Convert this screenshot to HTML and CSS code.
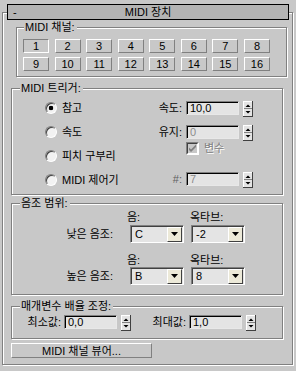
FILE: index.html
```html
<!DOCTYPE html>
<html>
  <head>
    <meta charset="utf-8">
    <link rel="stylesheet" href="styles.css">
  </head>
  <body>
    <svg class="sprites" xmlns="http://www.w3.org/2000/svg">
      <symbol id="spin" viewBox="0 0 10 16">
        <rect width="10" height="16" fill="#e4e4e4"/>
        <path d="M0 0.5H9.5M0.5 0V15.5" stroke="#fff"/>
        <path d="M0 15.5H10M9.5 0V16" stroke="#404040"/>
        <path d="M1 7.5H9" stroke="#808080"/>
        <path d="M2.5 6H7.5L5 3.5Z" fill="#000"/>
        <path d="M2.5 10H7.5L5 12.5Z" fill="#000"/>
      </symbol>
      <symbol id="drop" viewBox="0 0 7 4">
        <path d="M0 0H7L3.5 4Z" fill="#000"/>
      </symbol>
    </svg>

    <div class="rollout">
      <div class="rollout-title">
        <span class="collapse">-</span>
        <span>MIDI 장치</span>
      </div>

      <!-- channel buttons -->
      <div class="group channels">
        <div class="group-label">MIDI 채널:</div>
        <div class="channel-grid">
          <button class="btn pressed">1</button>
          <button class="btn">2</button>
          <button class="btn">3</button>
          <button class="btn">4</button>
          <button class="btn">5</button>
          <button class="btn">6</button>
          <button class="btn">7</button>
          <button class="btn">8</button>
          <button class="btn">9</button>
          <button class="btn">10</button>
          <button class="btn">11</button>
          <button class="btn">12</button>
          <button class="btn">13</button>
          <button class="btn">14</button>
          <button class="btn">15</button>
          <button class="btn">16</button>
        </div>
      </div>

      <!-- trigger -->
      <div class="group trigger">
        <div class="group-label">MIDI 트리거:</div>
        <div class="trigger-body">
          <div class="radio-list">
            <div class="radio-row"><span class="radio checked"></span>참고</div>
            <div class="radio-row"><span class="radio"></span>속도</div>
            <div class="radio-row"><span class="radio"></span>피치 구부리</div>
            <div class="radio-row"><span class="radio"></span>MIDI 제어기</div>
          </div>
          <div class="field-list">
            <div class="field-row">
              <span class="field-label">속도:</span>
              <span class="input">10,0</span>
              <svg class="spinner"><use href="#spin"/></svg>
            </div>
            <div class="field-row gap">
              <span class="field-label">유지:</span>
              <span class="input disabled">0</span>
              <svg class="spinner"><use href="#spin"/></svg>
            </div>
            <div class="check-row">
              <svg class="checkbox" viewBox="0 0 13 13">
                <rect width="13" height="13" fill="#fff"/>
                <path d="M0 0.5H12.5M0.5 0V12.5" stroke="#808080"/>
                <path d="M1 1.5H11.5M1.5 1V11.5" stroke="#404040"/>
                <rect x="2" y="2" width="9" height="9" fill="#c8c8c8"/>
                <path d="M3 5.5L5 7.5L10 2.5V5L5 10L3 8Z" fill="#808080"/>
              </svg>
              <span class="disabled-text">변수</span>
            </div>
            <div class="field-row far">
              <span class="field-label muted">#:</span>
              <span class="input disabled">7</span>
              <svg class="spinner"><use href="#spin"/></svg>
            </div>
          </div>
        </div>
      </div>

      <!-- note range -->
      <div class="group notes">
        <div class="group-label">음조 범위:</div>
        <div class="note-grid">
          <span></span>
          <span class="head">음:</span>
          <span class="head oct">옥타브:</span>
          <span class="note-label">낮은 음조:</span>
          <span class="select">C<span class="select-arrow"><svg class="tri"><use href="#drop"/></svg></span></span>
          <span class="select">-2<span class="select-arrow"><svg class="tri"><use href="#drop"/></svg></span></span>

          <span class="spacer"></span>
          <span></span>
          <span class="head">음:</span>
          <span class="head oct">옥타브:</span>
          <span class="note-label">높은 음조:</span>
          <span class="select">B<span class="select-arrow"><svg class="tri"><use href="#drop"/></svg></span></span>
          <span class="select">8<span class="select-arrow"><svg class="tri"><use href="#drop"/></svg></span></span>
        </div>
      </div>

      <!-- parameter scale -->
      <div class="group params">
        <div class="group-label">매개변수 배율 조정:</div>
        <div class="param-row">
          <span class="param-label">최소값:</span>
          <span class="input">0,0</span>
          <svg class="spinner"><use href="#spin"/></svg>
          <span class="param-label second">최대값:</span>
          <span class="input">1,0</span>
          <svg class="spinner"><use href="#spin"/></svg>
        </div>
      </div>

      <button class="btn viewer">MIDI 채널 뷰어...</button>
    </div>
  </body>
</html>
```

FILE: styles.css
```css
body {
  margin: 0;
  width: 296px;
  height: 371px;
  overflow: hidden;
  background: #c8c8c8;
  color: #000;
  font-family: "Liberation Sans", "Noto Sans CJK KR", sans-serif;
  font-size: 11px;
  line-height: 13px;
}

.sprites {
  display: none;
}

.rollout {
  box-sizing: border-box;
  height: 353px;
  margin: 12px 3px 0 2px;
  border: 1px solid #808080;
  box-shadow: inset 1px 1px #fff, 1px 1px #fff;
}

.rollout-title {
  box-sizing: border-box;
  display: grid;
  grid-template-columns: 1fr auto 1fr;
  align-items: center;
  height: 16px;
  margin: -9px 3px 0 4px;
  border: 1px solid #000;
  background: #b4b4b4;
}

.collapse {
  padding-left: 5px;
}

/* group boxes */
.group {
  box-sizing: border-box;
  border: 1px solid #808080;
  box-shadow: inset 1px 1px #fff, 1px 1px #fff;
}

.group-label {
  width: fit-content;
  margin: -7px 0 0 8px;
  padding: 0 2px 0 1px;
  background: #c8c8c8;
}

.channels {
  height: 50px;
  margin: 7px 5px 0 13px;
}

.channels .group-label {
  margin-left: 7px;
}

.trigger {
  height: 107px;
  margin: 11px 9px 0 8px;
}

.notes {
  height: 92px;
  margin: 8px 9px 0 8px;
}

.params {
  height: 33px;
  margin: 11px 9px 0 8px;
}

/* buttons */
.btn {
  box-sizing: border-box;
  padding: 0;
  border: 1px solid;
  border-color: #fff #808080 #808080 #fff;
  background: #c8c8c8;
  color: #000;
  font: inherit;
  line-height: 12px;
  text-align: center;
}

.btn.pressed {
  border-color: #808080 #fff #fff #808080;
}

.channel-grid {
  display: grid;
  grid-template-columns: repeat(8, 26px);
  grid-auto-rows: 14px;
  justify-content: space-between;
  row-gap: 4px;
  width: 247px;
  margin: 5px 0 0 6px;
}

.viewer {
  display: block;
  width: 141px;
  height: 15px;
  margin: 4px 0 0 8px;
}

/* trigger */
.trigger-body {
  display: flex;
}

.radio-list {
  box-sizing: border-box;
  width: 100px;
  padding: 1px 0 0 33px;
}

.radio-row {
  display: flex;
  align-items: center;
  gap: 5px;
  height: 24px;
  white-space: nowrap;
}

.radio {
  box-sizing: border-box;
  flex: none;
  width: 12px;
  height: 12px;
  border: 1px solid;
  border-color: #808080 #fff #fff #808080;
  border-radius: 50%;
  box-shadow: inset 1px 1px #404040;
  background: #f2f2f2;
}

.radio.checked {
  background: radial-gradient(circle, #000 2px, #f2f2f2 2.6px);
}

.field-list {
  padding-top: 6px;
}

.field-row {
  display: flex;
  align-items: flex-start;
}

.field-row.gap {
  margin-top: 8px;
}

.field-row.far {
  margin-top: 17px;
}

.field-label {
  width: 70px;
  margin-right: 4px;
  line-height: 14px;
  text-align: right;
}

.muted {
  color: #606060;
}

.input {
  box-sizing: border-box;
  width: 53px;
  height: 14px;
  padding-left: 3px;
  border: 1px solid;
  border-color: #808080 #e8e8e8 #e8e8e8 #808080;
  box-shadow: inset 1px 1px #000;
  background: #e4e4e4;
  line-height: 12px;
}

.input.disabled {
  color: #8c8c8c;
}

.spinner {
  flex: none;
  width: 10px;
  height: 16px;
  margin-left: 4px;
}

.check-row {
  display: flex;
  align-items: center;
  gap: 5px;
  height: 13px;
  margin: 1px 0 0 74px;
}

.checkbox {
  width: 13px;
  height: 13px;
}

.disabled-text {
  color: #808080;
  text-shadow: 1px 1px #fff;
}

/* note range */
.note-grid {
  display: grid;
  grid-template-columns: 111px 54px 54px;
  grid-template-rows: 14px 18px 11px 13px 18px;
  column-gap: 7px;
  margin-top: 1px;
}

.spacer {
  grid-column: 1 / -1;
}

.head {
  margin-left: -3px;
  white-space: nowrap;
}

.head.oct {
  margin-left: -1px;
}

.note-label {
  align-self: center;
  padding-right: 10px;
  text-align: right;
  white-space: nowrap;
}

.select {
  box-sizing: border-box;
  display: flex;
  align-items: center;
  justify-content: space-between;
  height: 18px;
  padding: 0 1px 0 4px;
  border: 1px solid;
  border-color: #808080 #fff #fff #808080;
  box-shadow: inset 1px 1px #404040;
  background: #e4e4e4;
}

.select-arrow {
  box-sizing: border-box;
  display: flex;
  align-items: center;
  justify-content: center;
  width: 15px;
  height: 15px;
  border: 1px solid;
  border-color: #fff #404040 #404040 #fff;
  background: #ece9d8;
}

.tri {
  width: 7px;
  height: 4px;
}

/* parameter scale */
.param-row {
  display: flex;
  align-items: flex-start;
  margin-top: 2px;
  padding-left: 12px;
}

.param-label {
  width: 37px;
  margin-right: 3px;
  line-height: 14px;
  text-align: right;
  white-space: nowrap;
}

.param-label.second {
  margin-left: 18px;
}

.param-row .input {
  width: 53px;
}
```
